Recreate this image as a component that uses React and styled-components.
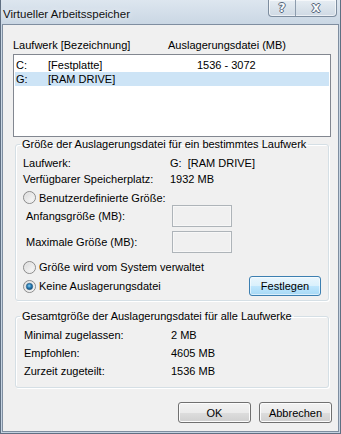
import React from 'react';
import styled, { createGlobalStyle } from 'styled-components';

const FONT = `"Liberation Sans", Arial, sans-serif`;

const Global = createGlobalStyle`
  html, body { margin: 0; padding: 0; }
  body {
    width: 341px; height: 434px; overflow: hidden;
    background: #c8d5e3;
    font-family: ${FONT};
    font-size: 11px;
    color: #000;
  }
  * { box-sizing: border-box; }
`;

const Window = styled.div`
  width: 341px;
  height: 434px;
  display: flex;
  flex-direction: column;
  background: linear-gradient(180deg, #dde6ef 0px, #cad7e4 24px, #c4d2e1 100%);
  border: 1px solid #5f6f82;
  border-top: none;
  padding: 0 1px 1px 1px;
`;

const TitleBar = styled.div`
  height: 24px;
  display: flex;
  align-items: flex-start;
  flex: none;
`;

const Title = styled.div`
  font-size: 11.5px;
  line-height: 16px;
  padding: 6px 0 0 1px;
  color: #111;
  text-shadow: 0 0 6px rgba(255, 255, 255, 0.9);
`;

const Captions = styled.div`
  margin-left: auto;
  margin-right: 2px;
  display: flex;
  height: 17px;
  border: 1px solid #7d8d9f;
  border-top: none;
  border-radius: 0 0 4px 4px;
  overflow: hidden;
  background: linear-gradient(180deg, #e6edf3 0%, #dae3eb 50%, #cfd9e4 100%);
  box-shadow: inset 0 0 0 1px rgba(255, 255, 255, 0.6);
`;

const CaptionBtn = styled.div`
  width: ${(p) => p.$w}px;
  height: 100%;
  display: flex;
  align-items: center;
  justify-content: center;
  font-family: "DejaVu Sans", sans-serif;
  font-size: ${(p) => p.$fs}px;
  font-weight: bold;
  color: #f7f9fb;
  text-shadow: 1px 0 0 #56667a, -1px 0 0 #56667a, 0 1px 0 #56667a, 0 -1px 0 #56667a;
  & + & { border-left: 1px solid #8d9cad; }
`;

const Client = styled.div`
  flex: 1;
  border: 1px solid #7f8ea0;
  background: #f0f0f0;
  display: flex;
  flex-direction: column;
`;

const HeaderRow = styled.div`
  margin: 13px 0 0 10px;
  height: 14px;
  line-height: 14px;
  display: grid;
  grid-template-columns: 155px auto;
`;

const ListBox = styled.div`
  margin: 2px 0 0 10px;
  width: 318px;
  height: 83px;
  border: 1px solid #828790;
  background: #fff;
  padding: 3px 0 0 1px;
`;

const ListRow = styled.div`
  width: 314px;
  height: 14px;
  line-height: 14px;
  padding-left: 1px;
  display: grid;
  grid-template-columns: 32px 149px auto;
  background: ${(p) => (p.$selected ? '#cde4f6' : 'transparent')};
`;

const GroupBox = styled.fieldset`
  margin: ${(p) => p.$top}px 0 0 12px;
  width: 314px;
  padding: 0;
  min-width: 0;
  border: 1px solid #d5dfe5;
  border-radius: 3px;
  box-shadow: inset 1px 1px 0 #ffffff, 1px 1px 0 #ffffff;
`;

const Legend = styled.legend`
  margin-left: 4px;
  padding: 0 2px;
  line-height: 14px;
  height: 14px;
  white-space: nowrap;
`;

const GroupBody = styled.div`
  padding: ${(p) => p.$pad};
  display: flex;
  flex-direction: column;
`;

const InfoRow = styled.div`
  height: ${(p) => p.$h}px;
  line-height: ${(p) => p.$h}px;
  display: grid;
  grid-template-columns: 147px auto;
  padding-left: ${(p) => p.$indent || 0}px;
`;

const RadioRow = styled.div`
  height: ${(p) => p.$h}px;
  margin-top: ${(p) => p.$mt || 0}px;
  display: flex;
  align-items: center;
  gap: 3px;
`;

const RadioLabel = styled.span`
  line-height: 14px;
`;

const InputRow = styled.div`
  height: 22px;
  margin-top: ${(p) => p.$mt || 0}px;
  padding-left: 3px;
  display: grid;
  grid-template-columns: 146px 60px;
  align-items: center;
`;

const TextBox = styled.div`
  width: 60px;
  height: 22px;
  border: 1px solid #aeb4b9;
  background: #f0f0f0;
  box-shadow: inset 0 0 0 1px #f7f7f7;
`;

const Button = styled.button`
  width: ${(p) => p.$w || 73}px;
  height: ${(p) => p.$h || 21}px;
  padding: 0;
  margin-left: ${(p) => (p.$push ? 'auto' : '0')};
  font-family: ${FONT};
  font-size: 11px;
  color: #000;
  border: 1px solid ${(p) => (p.$default ? '#3c7fb1' : '#707070')};
  border-radius: 3px;
  background: ${(p) =>
    p.$default
      ? 'linear-gradient(180deg, #eaf6fd 0%, #d9f0fc 50%, #bee6fd 51%, #a7d9f5 100%)'
      : 'linear-gradient(180deg, #f2f2f2 0%, #ebebeb 50%, #dddddd 51%, #cfcfcf 100%)'};
  box-shadow: inset 0 0 0 1px ${(p) => (p.$default ? 'rgba(255,255,255,0.55)' : '#fcfcfc')};
`;

const ButtonBar = styled.div`
  margin: 14px 6px 0 0;
  display: flex;
  justify-content: flex-end;
  gap: 8px;
`;

function Radio({ checked }) {
  return (
    <svg width="13" height="13" viewBox="0 0 13 13">
      <defs>
        <linearGradient id="rbg" x1="0" y1="0" x2="1" y2="1">
          <stop offset="0" stopColor="#d6d6d6" />
          <stop offset="1" stopColor="#ffffff" />
        </linearGradient>
        <radialGradient id="rdot" cx="0.45" cy="0.4" r="0.6">
          <stop offset="0" stopColor="#8fd0f2" />
          <stop offset="0.5" stopColor="#2a7fb6" />
          <stop offset="1" stopColor="#0f4a78" />
        </radialGradient>
      </defs>
      <circle cx="6.5" cy="6.5" r="6" fill="url(#rbg)" stroke="#8a8a8a" strokeWidth="1" />
      <circle cx="6.5" cy="6.5" r="4.6" fill="none" stroke="#e8e8e8" strokeWidth="0.8" />
      {checked && <circle cx="6.5" cy="6.5" r="3.2" fill="url(#rdot)" stroke="#2c5f86" strokeWidth="0.6" />}
    </svg>
  );
}

export default function App() {
  return (
    <>
      <Global />
      <Window>
        <TitleBar>
          <Title>Virtueller Arbeitsspeicher</Title>
          <Captions>
            <CaptionBtn $w={26} $fs={12}>?</CaptionBtn>
            <CaptionBtn $w={41} $fs={11}>X</CaptionBtn>
          </Captions>
        </TitleBar>
        <Client>
          <HeaderRow>
            <span>Laufwerk [Bezeichnung]</span>
            <span>Auslagerungsdatei (MB)</span>
          </HeaderRow>
          <ListBox>
            <ListRow>
              <span>C:</span>
              <span>[Festplatte]</span>
              <span>1536 - 3072</span>
            </ListRow>
            <ListRow $selected>
              <span>G:</span>
              <span>[RAM DRIVE]</span>
              <span></span>
            </ListRow>
          </ListBox>

          <GroupBox $top={0}>
            <Legend>Größe der Auslagerungsdatei für ein bestimmtes Laufwerk</Legend>
            <GroupBody $pad="4px 7px 4px 7px">
              <InfoRow $h={16}>
                <span>Laufwerk:</span>
                <span>G:&nbsp;&nbsp;[RAM DRIVE]</span>
              </InfoRow>
              <InfoRow $h={16}>
                <span>Verfügbarer Speicherplatz:</span>
                <span>1932 MB</span>
              </InfoRow>
              <RadioRow $h={15} $mt={3}>
                <Radio />
                <RadioLabel>Benutzerdefinierte Größe:</RadioLabel>
              </RadioRow>
              <InputRow>
                <span>Anfangsgröße (MB):</span>
                <TextBox />
              </InputRow>
              <InputRow $mt={4}>
                <span>Maximale Größe (MB):</span>
                <TextBox />
              </InputRow>
              <RadioRow $h={16} $mt={6}>
                <Radio />
                <RadioLabel>Größe wird vom System verwaltet</RadioLabel>
              </RadioRow>
              <RadioRow $h={20} $mt={1}>
                <Radio checked />
                <RadioLabel>Keine Auslagerungsdatei</RadioLabel>
                <Button $default $push $w={72} $h={20}>Festlegen</Button>
              </RadioRow>
            </GroupBody>
          </GroupBox>

          <GroupBox $top={8}>
            <Legend>Gesamtgröße der Auslagerungsdatei für alle Laufwerke</Legend>
            <GroupBody $pad="3px 7px 7px 8px">
              <InfoRow $h={18}>
                <span>Minimal zugelassen:</span>
                <span>2 MB</span>
              </InfoRow>
              <InfoRow $h={18}>
                <span>Empfohlen:</span>
                <span>4605 MB</span>
              </InfoRow>
              <InfoRow $h={18}>
                <span>Zurzeit zugeteilt:</span>
                <span>1536 MB</span>
              </InfoRow>
            </GroupBody>
          </GroupBox>

          <ButtonBar>
            <Button>OK</Button>
            <Button>Abbrechen</Button>
          </ButtonBar>
        </Client>
      </Window>
    </>
  );
}
